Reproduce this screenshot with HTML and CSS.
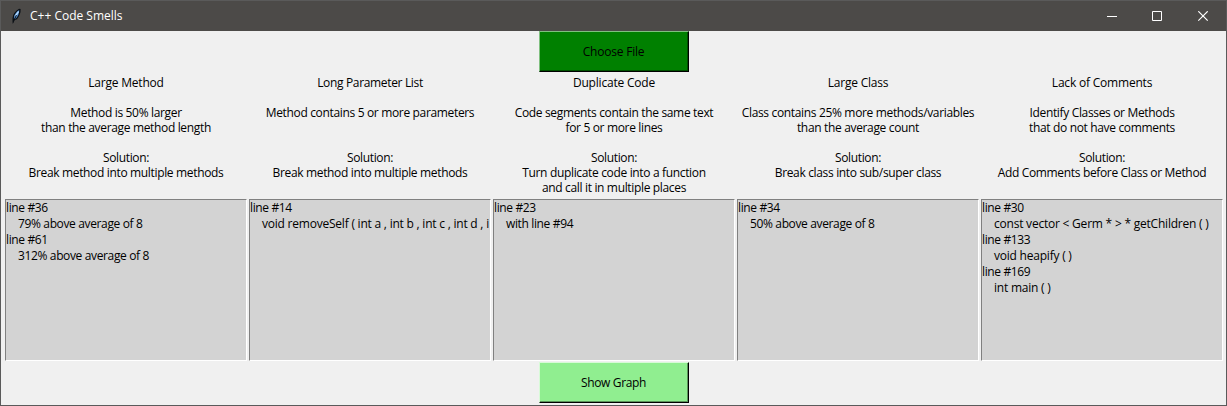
FILE: index.html
```html
<!DOCTYPE html>
<html lang="en">
<head>
<meta charset="utf-8">
<title>C++ Code Smells</title>
<link rel="stylesheet" href="styles.css">
</head>
<body>
<div class="window">
  <header class="titlebar">
    <svg class="feather" width="14" height="16" viewBox="0 0 14 16"><path d="M3.5 14.5 3.5 10 Q4 4.5 10 .8 L11.6 1 Q12 6 8 11.3 L5.5 12Z" fill="#0b1016"/><path d="M4.8 10.5 Q5 5.5 10.2 2 Q10.4 7 6.6 10.7Z" fill="#4b8bd0"/><path d="M6 8.5 9.6 3.5" stroke="#b9dcff" stroke-width="1.3"/><path d="M3.8 15.3 7.4 7" stroke="#0b1016"/></svg>
    <span class="title">C++ Code Smells</span>
    <div class="controls">
      <svg width="11" height="11" viewBox="0 0 11 11"><path d="M1 5.5H11" stroke="#fff"/></svg>
      <svg width="11" height="11" viewBox="0 0 11 11"><path d="M.5.5H9.5V9.5H.5Z" fill="none" stroke="#fff"/></svg>
      <svg width="11" height="11" viewBox="0 0 11 11"><path d="M.3.3 9.7 9.7M9.7.3.3 9.7" stroke="#fff" stroke-width="1.2"/></svg>
    </div>
  </header>
  <main class="content">
    <button class="btn choose">Choose File</button>
    <div class="columns">
      <section class="column">
        <p class="info"><span class="name">Large Method</span><br><br>Method is 50% larger<br>than the average method length<br><br>Solution:<br>Break method into multiple methods</p>
        <div class="list"><div>line #36</div><div class="detail">79% above average of 8</div><div>line #61</div><div class="detail">312% above average of 8</div></div>
      </section>
      <section class="column">
        <p class="info">Long Parameter List<br><br>Method contains 5 or more parameters<br><br><br>Solution:<br>Break method into multiple methods</p>
        <div class="list"><div>line #14</div><div class="detail code">void removeSelf ( int a , int b , int c , int d , i</div></div>
      </section>
      <section class="column">
        <p class="info"><span class="name">Duplicate Code</span><br><br>Code segments contain the same text<br>for 5 or more lines<br><br>Solution:<br>Turn duplicate code into a function<br>and call it in multiple places</p>
        <div class="list"><div>line #23</div><div class="detail">with line #94</div></div>
      </section>
      <section class="column">
        <p class="info"><span class="name">Large Class</span><br><br>Class contains 25% more methods/variables<br>than the average count<br><br>Solution:<br>Break class into sub/super class</p>
        <div class="list"><div>line #34</div><div class="detail">50% above average of 8</div></div>
      </section>
      <section class="column">
        <p class="info"><span class="name">Lack of Comments</span><br><br>Identify Classes or Methods<br>that do not have comments<br><br>Solution:<br>Add Comments before Class or Method</p>
        <div class="list"><div>line #30</div><div class="detail code">const vector &lt; Germ * &gt; * getChildren ( )</div><div>line #133</div><div class="detail code">void heapify ( )</div><div>line #169</div><div class="detail code">int main ( )</div></div>
      </section>
    </div>
    <button class="btn graph">Show Graph</button>
  </main>
</div>
</body>
</html>
```
FILE: styles.css
```css
* { box-sizing: border-box; }
body { margin: 0; font-family: "Open Sans", "Noto Sans", sans-serif; font-size: 12px; letter-spacing: -0.2px; color: #000; }
.window { width: 1227px; height: 406px; border: 1px solid #5a5a5a; background: #f0f0f0; overflow: hidden; }
.titlebar { height: 30px; background: #4c4a48; color: #fff; display: flex; align-items: center; padding-left: 8px; }
.feather { margin-right: 7px; }
.title { line-height: 30px; letter-spacing: 0; }
.controls { margin-left: auto; margin-right: 17px; display: flex; gap: 35px; }
.content { display: flex; flex-direction: column; align-items: center; }
.btn { width: 150px; height: 41px; padding: 0; font: inherit; letter-spacing: inherit; color: #000; border: 1px solid; flex: none; }
.choose { background: #008000; border-color: #7fbf7f #000 #000 #7fbf7f; box-shadow: inset -1px -1px #005000; }
.graph { background: #90ee90; border-color: #d8fad8 #000 #000 #d8fad8; box-shadow: inset -1px -1px #5a945a; margin-top: 1px; letter-spacing: -0.35px; }
.columns { display: grid; grid-template-columns: repeat(5, 242px); gap: 2px; align-self: flex-start; margin-left: 4px; }
.info { margin: 0; height: 127px; padding-top: 3px; line-height: 15px; letter-spacing: -0.34px; text-align: center; white-space: nowrap; }
.name { letter-spacing: -0.2px; }
.list { height: 162px; background: #d3d3d3; border: 1px solid; border-color: #808080 #fff #fff #808080; line-height: 16px; letter-spacing: -0.36px; white-space: nowrap; overflow: hidden; }
.detail { padding-left: 12px; }
.code { letter-spacing: -0.22px; }
```
